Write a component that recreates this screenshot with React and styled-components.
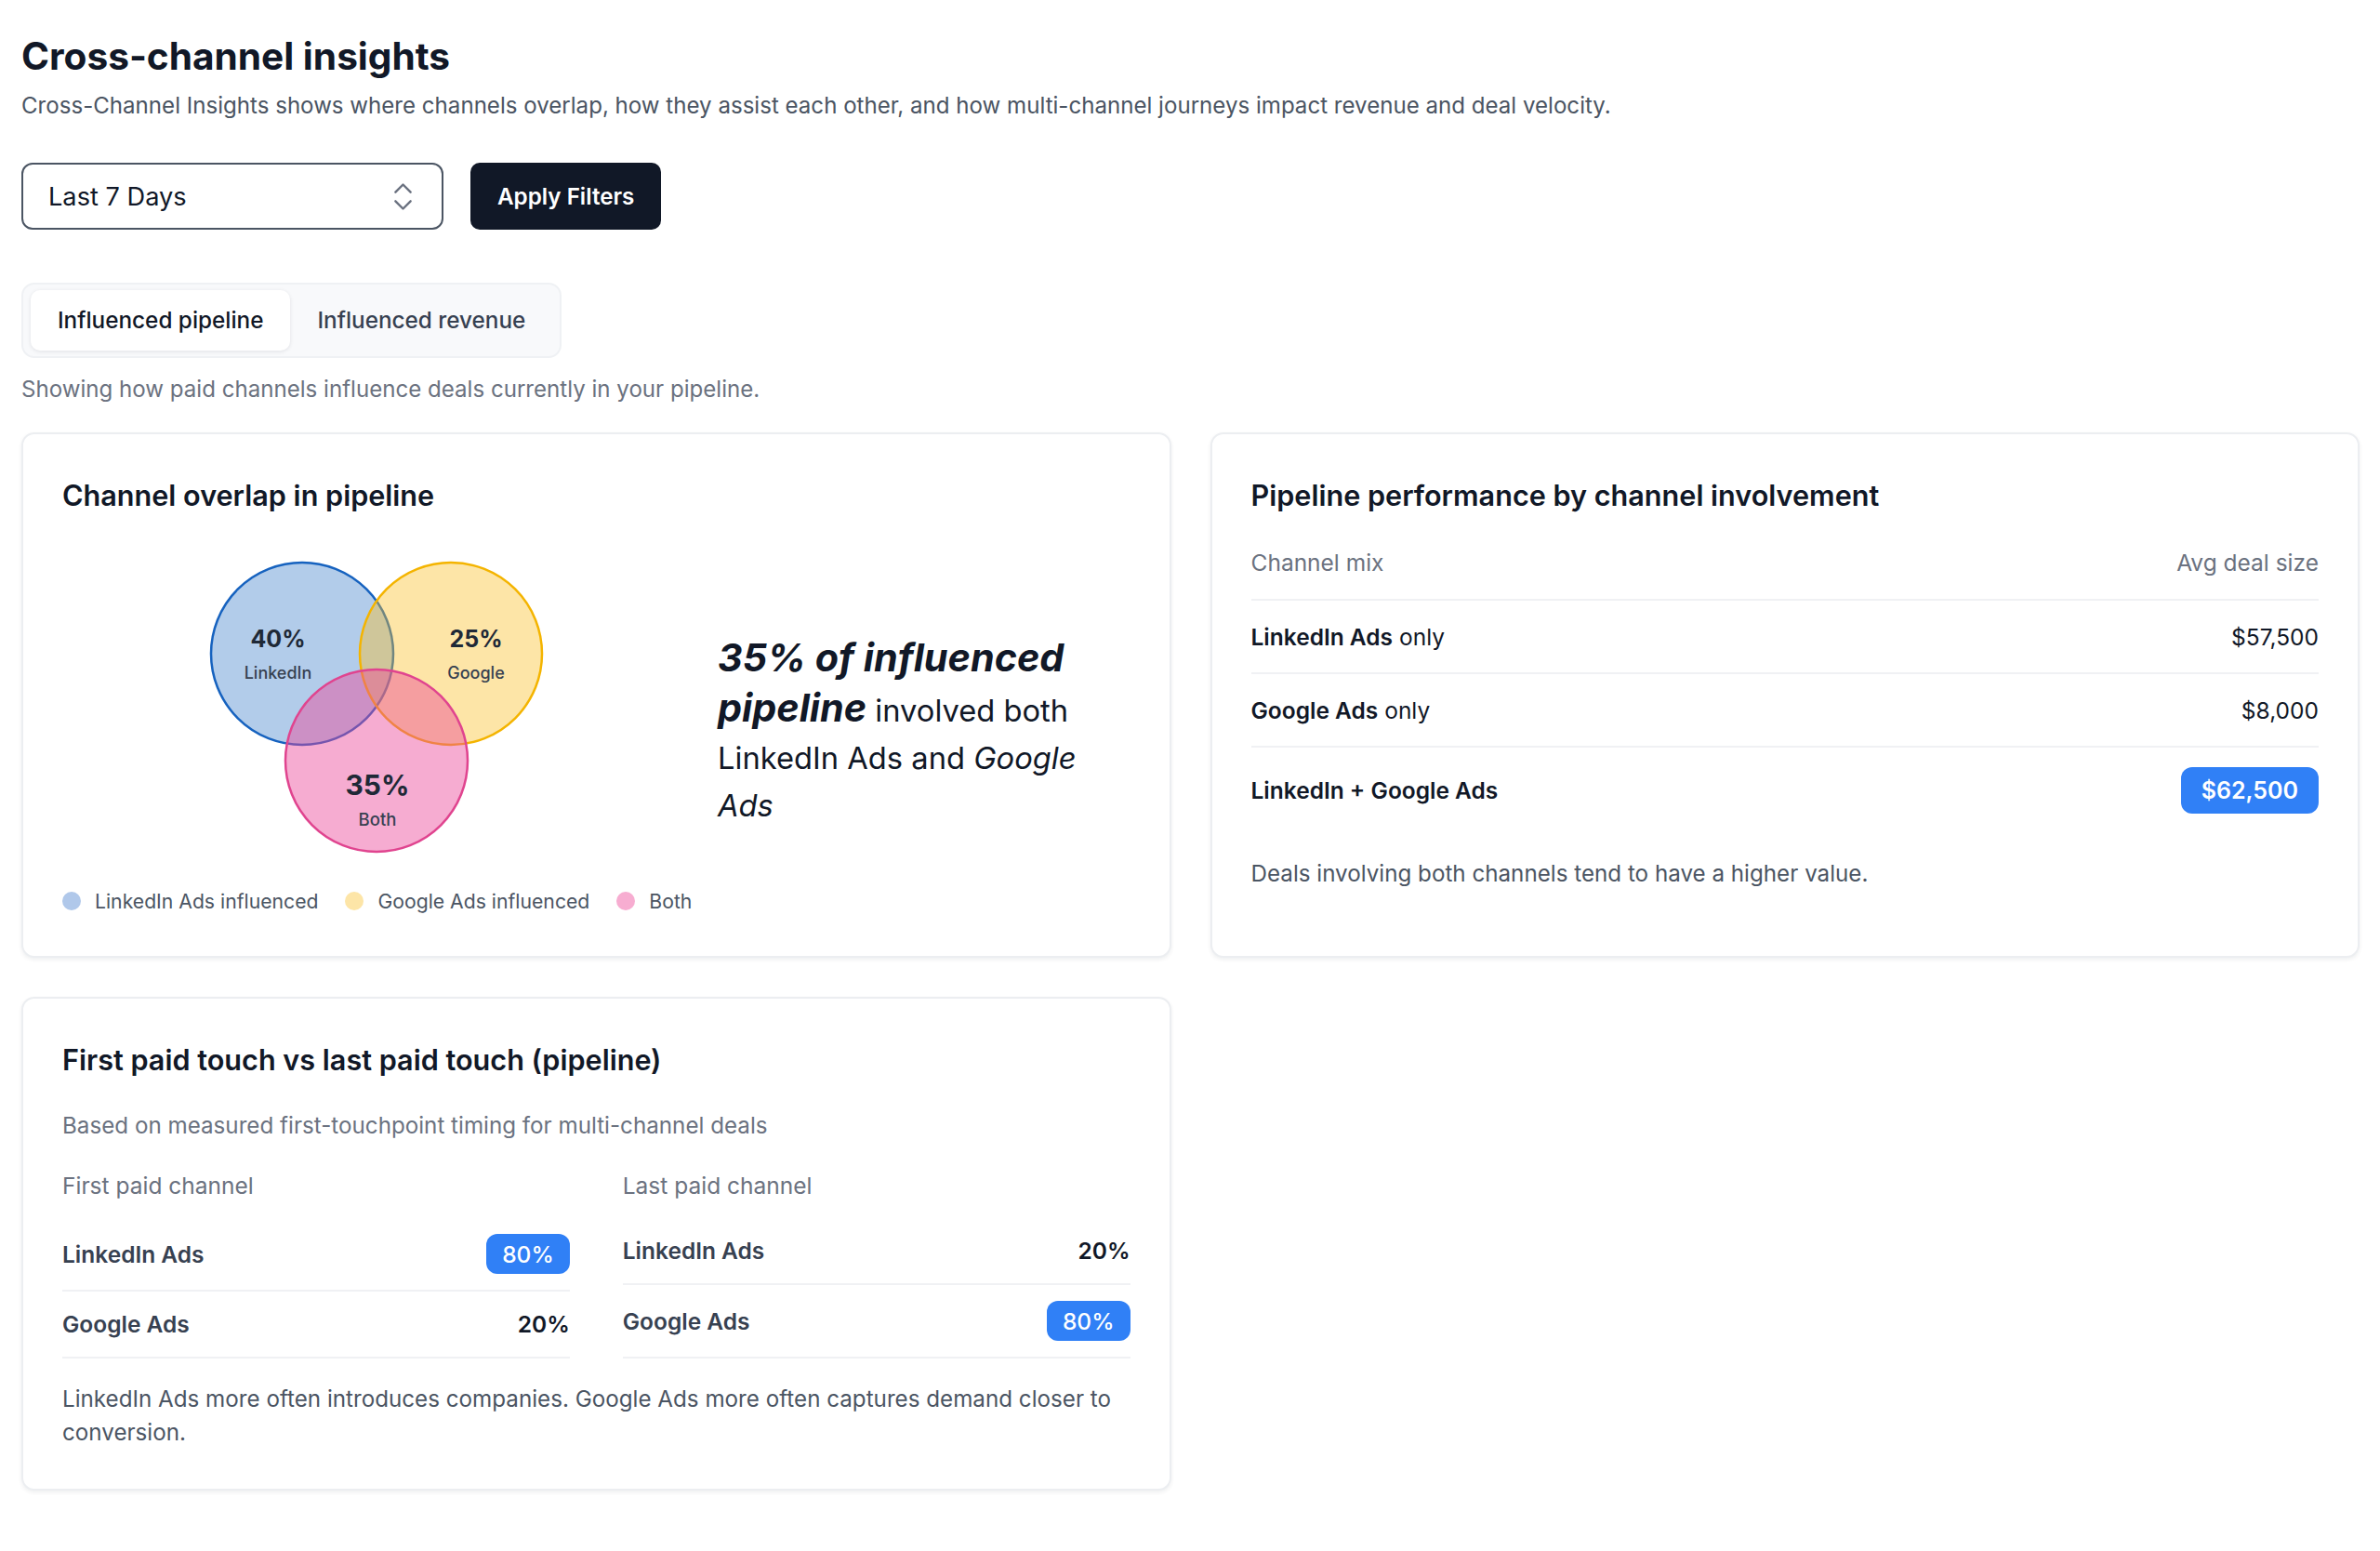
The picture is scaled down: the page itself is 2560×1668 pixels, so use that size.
import React from 'react';
import styled, { createGlobalStyle } from 'styled-components';
import { ChevronsUpDown } from 'lucide-react';

const GlobalStyle = createGlobalStyle`
  * { box-sizing: border-box; }
  body {
    margin: 0;
    background: #ffffff;
    font-family: Inter, "Noto Sans", sans-serif;
    color: #111827;
  }
`;

const Page = styled.div`
  padding: 36px 22px 60px 23px;
`;

const Title = styled.h1`
  margin: 0;
  font-size: 40.6px;
  line-height: 49px;
  font-weight: 700;
  color: #111827;
`;

const Subtitle = styled.p`
  margin: 12px 0 0;
  font-size: 24.1px;
  line-height: 34px;
  color: #4b5563;
`;

const Controls = styled.div`
  margin-top: 44px;
  display: flex;
  gap: 29px;
`;

const SelectBox = styled.div`
  width: 454px;
  height: 72px;
  display: flex;
  align-items: center;
  justify-content: space-between;
  padding: 0 22px 0 27px;
  border: 2px solid #4b5563;
  border-radius: 12px;
  font-size: 27.2px;
  color: #111827;
  svg { color: #6b7280; }
`;

const ApplyButton = styled.button`
  height: 72px;
  padding: 0 29px;
  border: none;
  border-radius: 10px;
  background: #111827;
  color: #ffffff;
  font-family: inherit;
  font-size: 24.2px;
  font-weight: 600;
`;

const TabList = styled.div`
  margin-top: 57px;
  display: inline-flex;
  padding: 6px 8px;
  background: #f8f9fb;
  border: 2px solid #eff1f4;
  border-radius: 14px;
`;

const Tab = styled.div`
  height: 65px;
  line-height: 65px;
  padding: 0 29px;
  font-size: 24.3px;
  font-weight: 500;
  border-radius: 10px;
  color: ${p => (p.$active ? '#111827' : '#374151')};
  background: ${p => (p.$active ? '#ffffff' : 'transparent')};
  box-shadow: ${p => (p.$active ? '0 1px 4px rgba(17, 24, 39, 0.1)' : 'none')};
`;

const Caption = styled.p`
  margin: 17px 0 0;
  font-size: 24.1px;
  line-height: 34px;
  color: #6b7280;
`;

const Grid = styled.div`
  margin-top: 29px;
  display: grid;
  grid-template-columns: 1fr 1fr;
  column-gap: 42px;
  row-gap: 42px;
`;

const Card = styled.section`
  background: #ffffff;
  border: 2px solid #eceef1;
  border-radius: 14px;
  box-shadow: 0 2px 4px rgba(17, 24, 39, 0.07);
  padding: 42px;
`;

const CardTitle = styled.h2`
  margin: 0;
  font-size: 30.6px;
  line-height: 48px;
  font-weight: 600;
  color: #111827;
`;

const VennRow = styled.div`
  margin-top: 39px;
  display: flex;
  align-items: flex-start;
`;

const VennBox = styled.div`
  flex: 0 0 676px;
  display: flex;
  justify-content: center;
`;

const Insight = styled.p`
  margin: 86px 0 0 29px;
  font-size: 32.7px;
  line-height: 51px;
  color: #111827;
  strong {
    font-size: 41.3px;
    line-height: 50px;
    font-weight: 700;
    font-style: italic;
  }
  em { font-style: italic; }
`;

const Line = styled.span`
  display: block;
`;

const Legend = styled.div`
  margin-top: 26px;
  display: flex;
  gap: 29px;
`;

const LegendItem = styled.div`
  display: flex;
  align-items: center;
  gap: 15px;
  font-size: 21.2px;
  line-height: 34px;
  color: #4b5563;
  &::before {
    content: '';
    width: 20px;
    height: 20px;
    border-radius: 50%;
    background: ${p => p.$color};
  }
`;

const HeadRow = styled.div`
  margin-top: 30px;
  display: flex;
  justify-content: space-between;
  padding-bottom: 21px;
  border-bottom: 2px solid #f0f1f4;
  font-size: 24.5px;
  line-height: 36px;
  color: #6b7280;
`;

const Row = styled.div`
  display: flex;
  justify-content: space-between;
  align-items: center;
  padding: ${p => p.$pad || '20.5px'} 0;
  border-bottom: ${p => (p.$last ? 'none' : '2px solid #f0f1f4')};
  font-size: 24.5px;
  line-height: 36px;
  color: ${p => p.$color || '#111827'};
  b { font-weight: 600; }
`;

const Value = styled.span`
  font-weight: ${p => p.$weight || 400};
  color: #111827;
`;

const Badge = styled.span`
  display: inline-flex;
  align-items: center;
  height: ${p => p.$h || '50px'};
  padding: 0 ${p => p.$px || '22px'};
  border-radius: 12px;
  background: #3080f6;
  color: #ffffff;
  font-size: ${p => p.$fs || '25px'};
  font-weight: ${p => p.$weight || 600};
`;

const Note = styled.p`
  margin: ${p => p.$mt || '27px'} 0 0;
  font-size: 24.2px;
  line-height: 36px;
  color: #4b5563;
`;

const Muted = styled.p`
  margin: 29px 0 0;
  font-size: 24.2px;
  line-height: 36px;
  color: #6b7280;
`;

const TouchCols = styled.div`
  margin-top: 28px;
  display: grid;
  grid-template-columns: 1fr 1fr;
  column-gap: 57px;
`;

const ColHead = styled.div`
  font-size: 24.5px;
  line-height: 36px;
  color: #6b7280;
  margin-bottom: 17px;
`;

function Venn() {
  return (
    <svg width="400" height="330" viewBox="0 0 400 330">
      <circle cx="120" cy="107" r="98" fill="#1565c0" fillOpacity="0.33" stroke="#1662bf" strokeWidth="2.5" />
      <circle cx="280" cy="107" r="98" fill="#fbbf24" fillOpacity="0.4" stroke="#f4b400" strokeWidth="2.5" />
      <circle cx="200" cy="222" r="98" fill="#ec4899" fillOpacity="0.45" stroke="#e0448f" strokeWidth="2.5" />
      <g fontFamily="Inter, sans-serif" textAnchor="middle" dominantBaseline="central" fill="#1f2937">
        <text x="94" y="91" fontSize="25" fontWeight="700">40%</text>
        <text x="94" y="127" fontSize="18" fontWeight="500" fill="#374151">LinkedIn</text>
        <text x="307" y="91" fontSize="25" fontWeight="700">25%</text>
        <text x="307" y="127" fontSize="18" fontWeight="500" fill="#374151">Google</text>
        <text x="201" y="248" fontSize="30" fontWeight="700">35%</text>
        <text x="201" y="285" fontSize="18.5" fontWeight="500" fill="#374151">Both</text>
      </g>
    </svg>
  );
}

const firstTouch = [
  { label: 'LinkedIn Ads', value: '80%', top: true },
  { label: 'Google Ads', value: '20%' },
];

const lastTouch = [
  { label: 'LinkedIn Ads', value: '20%' },
  { label: 'Google Ads', value: '80%', top: true },
];

function TouchColumn({ title, rows }) {
  return (
    <div>
      <ColHead>{title}</ColHead>
      {rows.map(r => (
        <Row key={r.label} $pad="17px" $color="#374151">
          <b>{r.label}</b>
          {r.top ? (
            <Badge $h="43px" $px="17px" $fs="24.5px" $weight={500}>{r.value}</Badge>
          ) : (
            <Value $weight={600}>{r.value}</Value>
          )}
        </Row>
      ))}
    </div>
  );
}

export default function App() {
  return (
    <>
      <GlobalStyle />
      <Page>
        <Title>Cross-channel insights</Title>
        <Subtitle>
          Cross-Channel Insights shows where channels overlap, how they assist each other, and how multi-channel journeys impact revenue and deal velocity.
        </Subtitle>

        <Controls>
          <SelectBox>
            <span>Last 7 Days</span>
            <ChevronsUpDown size={39} strokeWidth={1.5} />
          </SelectBox>
          <ApplyButton>Apply Filters</ApplyButton>
        </Controls>

        <TabList>
          <Tab $active>Influenced pipeline</Tab>
          <Tab>Influenced revenue</Tab>
        </TabList>

        <Caption>Showing how paid channels influence deals currently in your pipeline.</Caption>

        <Grid>
          <Card>
            <CardTitle>Channel overlap in pipeline</CardTitle>
            <VennRow>
              <VennBox>
                <Venn />
              </VennBox>
              <Insight>
                <Line><strong>35% of influenced</strong></Line>
                <Line><strong>pipeline</strong> involved both</Line>
                <Line>LinkedIn Ads and <em>Google</em></Line>
                <Line><em>Ads</em></Line>
              </Insight>
            </VennRow>
            <Legend>
              <LegendItem $color="#b0c8ea">LinkedIn Ads influenced</LegendItem>
              <LegendItem $color="#fde5a7">Google Ads influenced</LegendItem>
              <LegendItem $color="#f7add1">Both</LegendItem>
            </Legend>
          </Card>

          <Card>
            <CardTitle>Pipeline performance by channel involvement</CardTitle>
            <HeadRow>
              <span>Channel mix</span>
              <span>Avg deal size</span>
            </HeadRow>
            <Row>
              <span><b>LinkedIn Ads</b> only</span>
              <Value>$57,500</Value>
            </Row>
            <Row>
              <span><b>Google Ads</b> only</span>
              <Value>$8,000</Value>
            </Row>
            <Row $last>
              <b>LinkedIn + Google Ads</b>
              <Badge>$62,500</Badge>
            </Row>
            <Note>Deals involving both channels tend to have a higher value.</Note>
          </Card>

          <Card>
            <CardTitle>First paid touch vs last paid touch (pipeline)</CardTitle>
            <Muted>Based on measured first-touchpoint timing for multi-channel deals</Muted>
            <TouchCols>
              <TouchColumn title="First paid channel" rows={firstTouch} />
              <TouchColumn title="Last paid channel" rows={lastTouch} />
            </TouchCols>
            <Note $mt="26px">
              LinkedIn Ads more often introduces companies. Google Ads more often captures demand closer to conversion.
            </Note>
          </Card>
        </Grid>
      </Page>
    </>
  );
}
